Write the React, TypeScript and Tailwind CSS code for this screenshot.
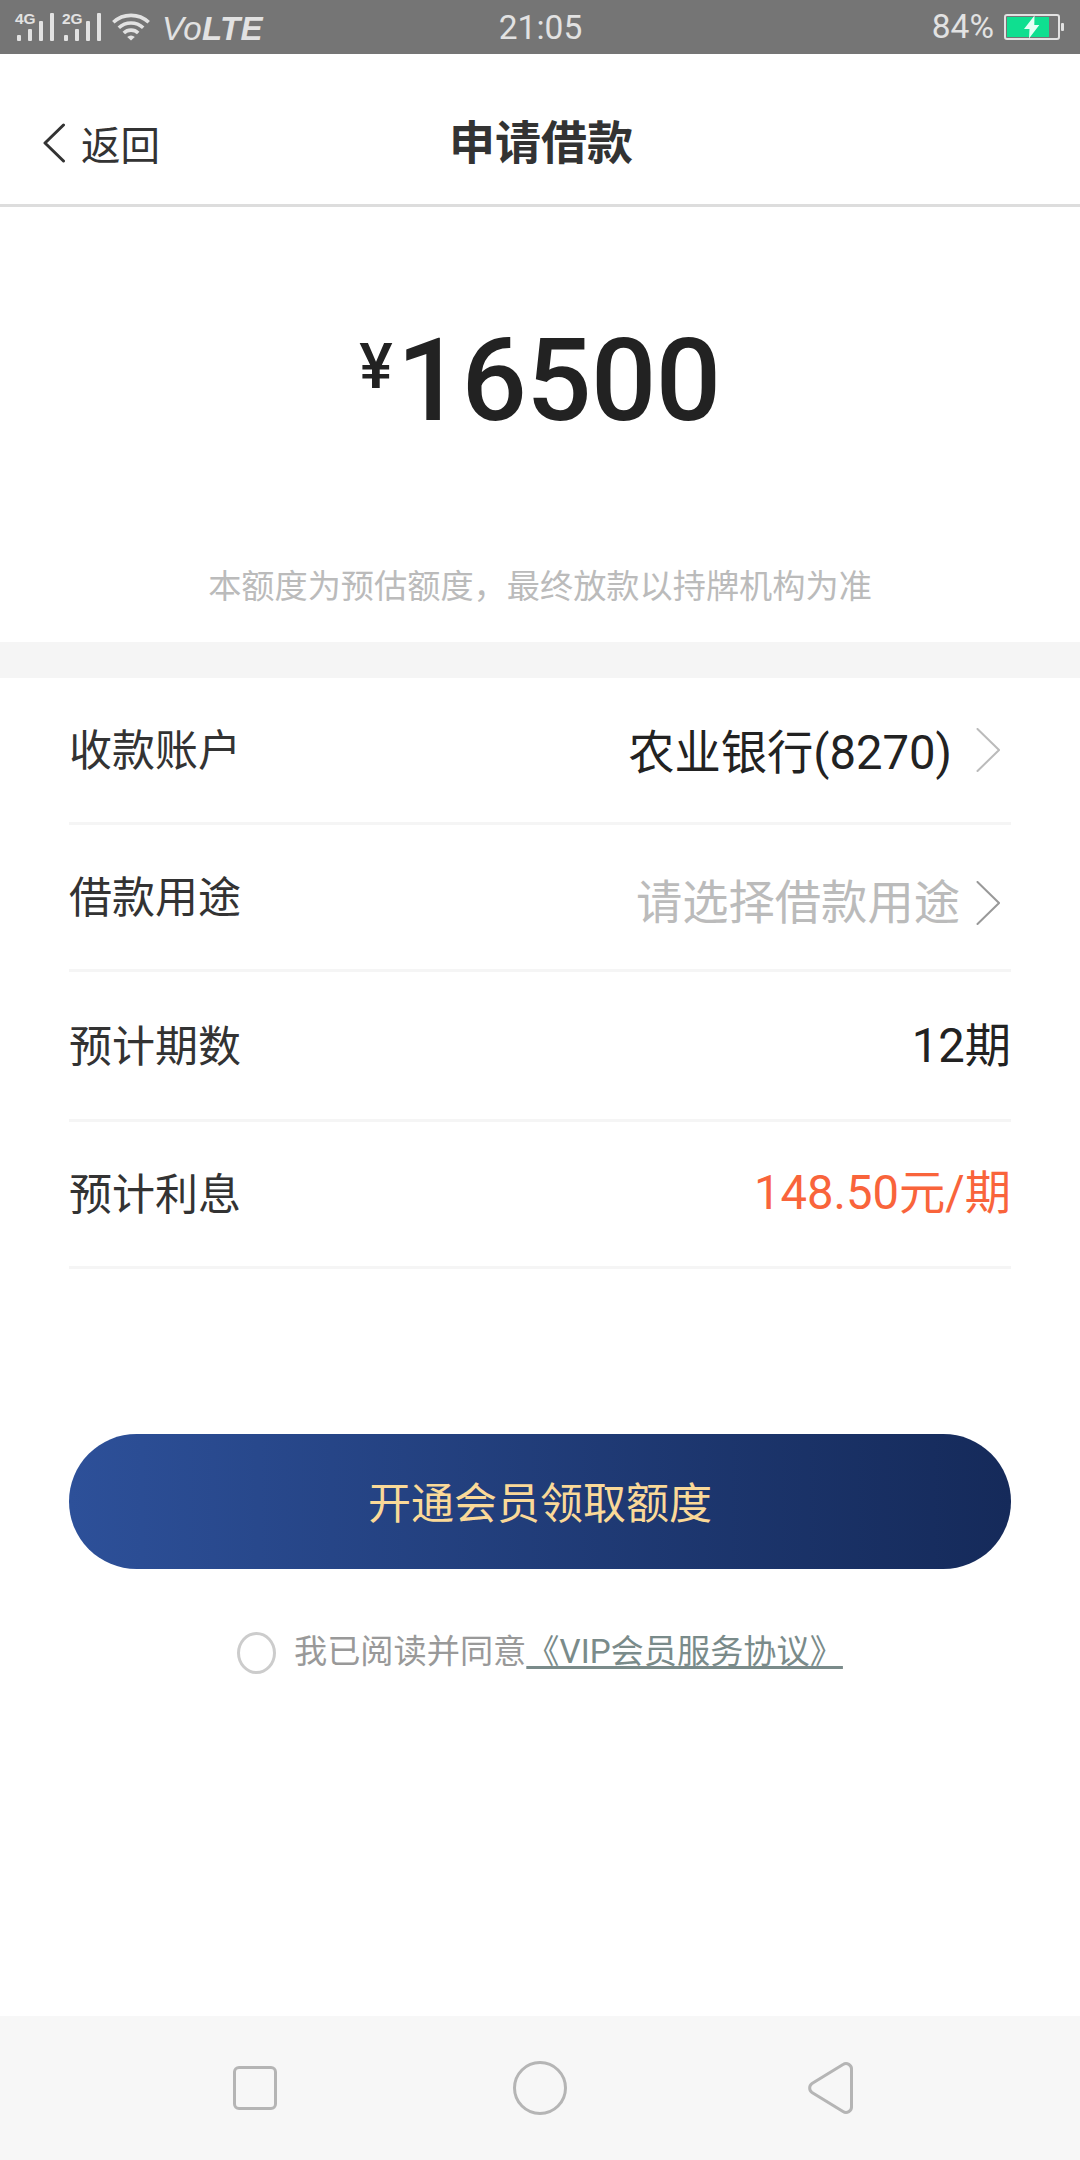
import React from 'react';

interface LoanRow {
  label: string;
  value: React.ReactNode;
  height: string;
  valueClass: string;
  chevron?: string;
}

function Num({ children }: { children: React.ReactNode }) {
  return <span className="text-[47.200px]">{children}</span>;
}

const rows: LoanRow[] = [
  { label: '收款账户', value: <>农业银行<Num>(8270)</Num></>, height: 'h-[147px]', valueClass: 'text-[#222] pr-[24px] mt-[6px]', chevron: 'text-[#bbb]' },
  { label: '借款用途', value: '请选择借款用途', height: 'h-[147px]', valueClass: 'text-[#bbb] pr-[16px] mt-[12px]', chevron: 'text-[#999] mt-[11px]' },
  { label: '预计期数', value: <><Num>12</Num>期</>, height: 'h-[150px]', valueClass: 'text-[#222]' },
  { label: '预计利息', value: <><Num>148.50</Num>元<Num>/</Num>期</>, height: 'h-[147px]', valueClass: 'text-[#f9643b] -mt-[2px]' },
];

function Signal({ label }: { label: string }) {
  return (
    <div className="relative h-[28px] w-[37px]">
      <span className="absolute -left-[2px] -top-[2px] font-['Liberation_Sans'] text-[15.500px] font-bold leading-[16px]">{label}</span>
      <svg className="block" width="37" height="28" fill="currentColor">
        <rect x="0" y="22" width="4" height="6" rx="1" />
        <rect x="11" y="16" width="4" height="12" rx="1" />
        <rect x="22" y="8" width="4" height="20" rx="1" />
        <rect x="33" y="0" width="4" height="28" rx="1" />
      </svg>
    </div>
  );
}

function StatusBar() {
  return (
    <div className="grid h-[54px] grid-cols-3 items-center bg-[#757575] pl-[17px] pr-[16px] text-[#e2e2e2]">
      <div className="flex items-center">
        <Signal label="4G" />
        <div className="w-[10px]" />
        <Signal label="2G" />
        <svg className="ml-[11px]" width="38" height="28" viewBox="0 0 38 28" fill="none" stroke="currentColor" strokeWidth="3.6">
          <path d="M1.3 9.3a26 26 0 0 1 35.4 0" />
          <path d="M6.8 14.8a18 18 0 0 1 24.4 0" />
          <path d="M11.8 20a10.500 10.500 0 0 1 14.400 0" />
          <path d="M19 27.500l-3.800-3.600a5.500 5.500 0 0 1 7.600 0z" fill="currentColor" stroke="none" />
        </svg>
        <span className="ml-[12px] mt-[4px] whitespace-nowrap font-['Liberation_Sans'] text-[33px] italic leading-[32px] tracking-[0.4px]">
          Vo<b>LTE</b>
        </span>
      </div>
      <span className="mt-[2px] text-center text-[33.500px] leading-[40px]">21:05</span>
      <div className="flex items-center justify-end">
        <span className="-mt-[1px] text-[33.500px] leading-[40px]">84%</span>
        <svg className="ml-[10px]" width="60" height="26" viewBox="0 0 60 26">
          <rect x="1" y="1" width="54" height="24" rx="2" fill="none" stroke="currentColor" strokeWidth="2" />
          <rect x="3" y="3" width="42" height="20" fill="#0fdf90" />
          <path d="M30.500 1.500L20 15h5.500L25 24.500L35.300 11h-5z" fill="#e6fff5" />
          <rect x="57" y="9" width="3" height="8" rx="1" fill="currentColor" />
        </svg>
      </div>
    </div>
  );
}

function Chevron({ className }: { className?: string }) {
  return (
    <svg className={`mr-[11px] shrink-0 ${className ?? ''}`} width="24" height="44" viewBox="0 0 24 44" fill="none" stroke="currentColor" strokeWidth="2">
      <path d="M1.500 1l21.500 21L1.500 43" strokeLinecap="round" />
    </svg>
  );
}

export default function App() {
  return (
    <div className="flex h-[2160px] w-[1080px] flex-col overflow-hidden bg-white font-[Roboto,'Noto_Sans_CJK_SC',sans-serif] text-[#333]">
      <StatusBar />

      <header className="grid h-[153px] grid-cols-3 items-center border-b-[3px] border-[#ddd] px-[42px] pt-[35px]">
        <div className="flex items-center">
          <svg className="-mt-[7px]" width="24" height="40" viewBox="0 0 24 40" fill="none" stroke="currentColor" strokeWidth="3" strokeLinecap="round" strokeLinejoin="round">
            <path d="M21.500 2L3 20l18.500 18" />
          </svg>
          <span className="ml-[15px] text-[39.500px] leading-[60px]">返回</span>
        </div>
        <h1 className="-mt-[7px] pl-[2px] text-center text-[46px] font-bold leading-[60px]">申请借款</h1>
      </header>

      <section className="flex h-[435px] flex-col items-center">
        <div className="mt-[107px] flex h-[134px] items-start pl-[2px] font-medium text-[#222]">
          <span className="-ml-[2px] mt-[17px] text-[63px] leading-[72px]">¥</span>
          <span className="ml-[4px] text-[115px] leading-[134px] tracking-[-0.6px]">16500</span>
        </div>
        <p className="mt-[115px] text-[33.200px] leading-[48px] text-[#bbb]">本额度为预估额度，最终放款以持牌机构为准</p>
      </section>

      <div className="h-[36px] bg-[#f5f5f5]" />

      <section className="px-[69px]">
        {rows.map((row) => (
          <div key={row.label} className={`flex items-center border-b-[3px] border-[#f5f5f5] ${row.height}`}>
            <span className="mt-[2px] flex-1 text-[43px] leading-[60px]">{row.label}</span>
            <span className={`text-[46.300px] leading-[60px] ${row.valueClass}`}>{row.value}</span>
            {row.chevron && <Chevron className={row.chevron} />}
          </div>
        ))}
      </section>

      <div className="mt-[165px] px-[69px]">
        <button className="flex h-[135px] w-full items-center justify-center rounded-full bg-linear-to-r from-[#2d5099] to-[#152a5a] pt-[4px] text-[43px] leading-[60px] text-[#fad998]">
          开通会员领取额度
        </button>
      </div>

      <div className="mt-[59px] flex items-center pl-[237px] text-[33.200px] leading-[48px] text-[#999]">
        <span className="mt-[2px] h-[42px] w-[39px] rounded-[50%] border-[3px] border-[#ccc]" />
        <span className="ml-[18px]">我已阅读并同意</span>
        <span className="text-[#7a8b8a] underline decoration-[3px] underline-offset-[3px] [text-decoration-skip-ink:none]">《VIP会员服务协议》</span>
      </div>

      <nav className="mt-auto flex h-[144px] items-center bg-[#f7f7f7] pl-[233px] text-[#b5b5b5]">
        <div className="h-[44px] w-[44px] rounded-[6px] border-[3px] border-[#b5b5b5]" />
        <div className="ml-[236px] h-[54px] w-[54px] rounded-full border-[3px] border-[#b5b5b5]" />
        <svg className="-mt-[1px] ml-[241px]" width="46" height="52" viewBox="0 0 46 52" fill="none" stroke="currentColor" strokeWidth="3">
          <path d="M35 2.500L4 21.500a5.500 5.500 0 0 0 0 9L35 49.500a5.500 5.500 0 0 0 8.500-5v-37a5.500 5.500 0 0 0-8.500-5z" />
        </svg>
      </nav>
    </div>
  );
}
